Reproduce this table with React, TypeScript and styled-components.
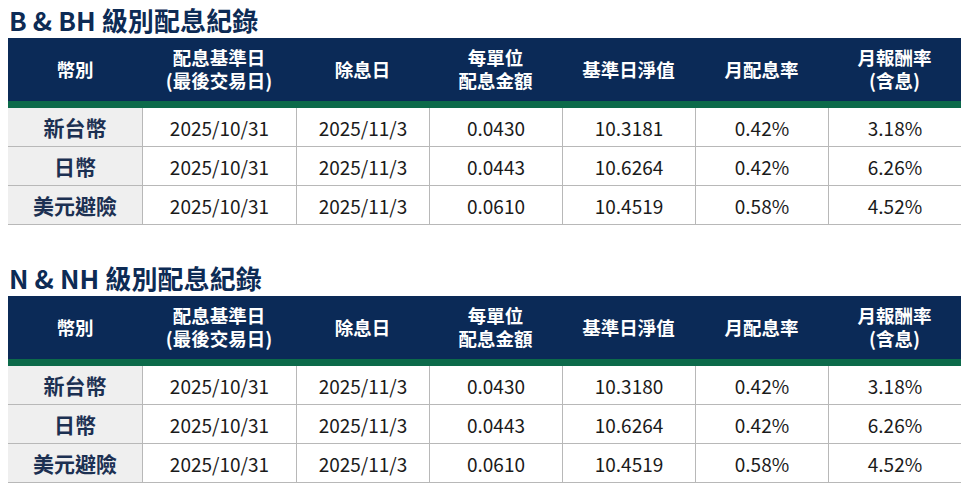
import React from "react";
import styled, { createGlobalStyle } from "styled-components";

const Global = createGlobalStyle`
  html, body { margin: 0; padding: 0; background: #ffffff; }
  body { font-family: "Noto Sans CJK TC", "Noto Sans", sans-serif; }
`;

const COLS = "134px 154px 133px 133px 133px 133px 133px";

const Page = styled.div`
  width: 963px;
  padding: 0 2px 0 8px;
  box-sizing: border-box;
  display: flex;
  flex-direction: column;
`;

const Section = styled.section<{ $first?: boolean }>`
  display: flex;
  flex-direction: column;
  margin-top: ${(p) => (p.$first ? "0" : "33px")};
`;

const Title = styled.h2`
  margin: 0;
  height: 38px;
  padding-left: 1px;
  display: flex;
  align-items: center;
  font-size: 26px;
  font-weight: 700;
  color: #0d2b55;
  letter-spacing: 0.1px;
`;

const HeadRow = styled.div`
  display: grid;
  grid-template-columns: ${COLS};
  height: 63px;
  background: #0b2a57;
  border-bottom: 7px solid #0c6a4a;
`;

const HeadCell = styled.div`
  display: flex;
  align-items: center;
  justify-content: center;
  text-align: center;
  color: #ffffff;
  font-size: 18.5px;
  font-weight: 700;
  line-height: 23px;
  white-space: pre-line;
  padding-bottom: 1px;
`;

const Row = styled.div`
  display: grid;
  grid-template-columns: ${COLS};
  height: 39px;
`;

const Cell = styled.div<{ $label?: boolean }>`
  display: flex;
  align-items: center;
  justify-content: center;
  box-sizing: border-box;
  border-bottom: 1px solid #b8b8b8;
  border-left: ${(p) => (p.$label ? "none" : "1px solid #b8b8b8")};
  background: ${(p) => (p.$label ? "#efefef" : "#ffffff")};
  color: ${(p) => (p.$label ? "#1c3052" : "#1a1a1a")};
  font-size: ${(p) => (p.$label ? "21px" : "19px")};
  font-weight: ${(p) => (p.$label ? 700 : 400)};
`;

const headers = [
  "幣別",
  "配息基準日\n(最後交易日)",
  "除息日",
  "每單位\n配息金額",
  "基準日淨值",
  "月配息率",
  "月報酬率\n(含息)",
];

type Rec = string[];

const tableB: Rec[] = [
  ["新台幣", "2025/10/31", "2025/11/3", "0.0430", "10.3181", "0.42%", "3.18%"],
  ["日幣", "2025/10/31", "2025/11/3", "0.0443", "10.6264", "0.42%", "6.26%"],
  ["美元避險", "2025/10/31", "2025/11/3", "0.0610", "10.4519", "0.58%", "4.52%"],
];

const tableN: Rec[] = [
  ["新台幣", "2025/10/31", "2025/11/3", "0.0430", "10.3180", "0.42%", "3.18%"],
  ["日幣", "2025/10/31", "2025/11/3", "0.0443", "10.6264", "0.42%", "6.26%"],
  ["美元避險", "2025/10/31", "2025/11/3", "0.0610", "10.4519", "0.58%", "4.52%"],
];

function DivTable({ title, rows, first }: { title: string; rows: Rec[]; first?: boolean }) {
  return (
    <Section $first={first}>
      <Title>{title}</Title>
      <HeadRow>
        {headers.map((h) => (
          <HeadCell key={h}>{h}</HeadCell>
        ))}
      </HeadRow>
      {rows.map((r) => (
        <Row key={r[0]}>
          {r.map((v, i) => (
            <Cell key={i} $label={i === 0}>
              {v}
            </Cell>
          ))}
        </Row>
      ))}
    </Section>
  );
}

export default function App() {
  return (
    <>
      <Global />
      <Page>
        <DivTable title="B & BH 級別配息紀錄" rows={tableB} first />
        <DivTable title="N & NH 級別配息紀錄" rows={tableN} />
      </Page>
    </>
  );
}
